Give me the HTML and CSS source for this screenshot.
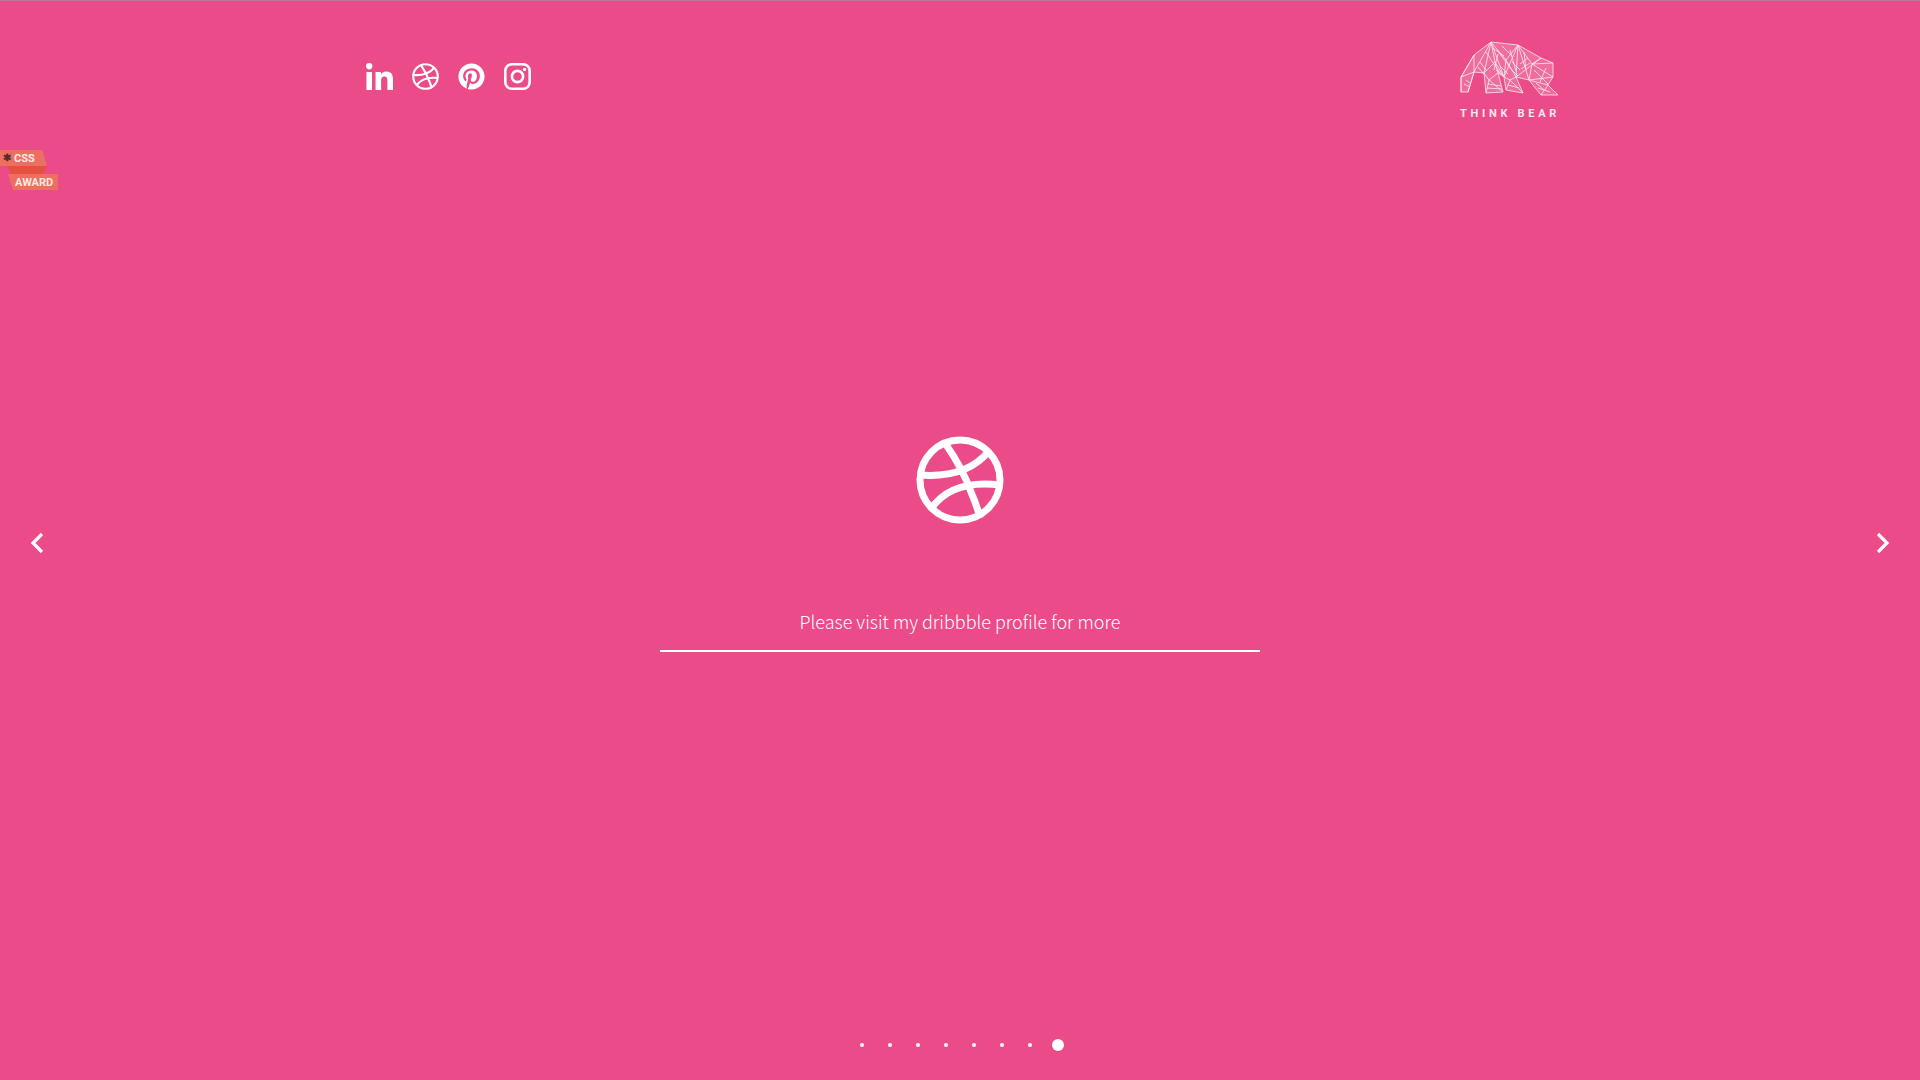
FILE: index.html
```html
<!DOCTYPE html>
<html lang="en">
<head>
<meta charset="utf-8">
<title>Think Bear</title>
<link rel="stylesheet" href="styles.css">
</head>
<body>
<svg class="defs" aria-hidden="true">
  <symbol id="dribbble" viewBox="0 0 88 88">
    <g fill="none" stroke="currentColor" stroke-width="7">
      <circle cx="44" cy="44" r="40"/>
      <path d="M29 7C38 20 48 36 55 56C59 65 62 74 64 82"/>
      <path d="M3.5 39C30 41 56 36 73 15"/>
      <path d="M15 73C28 54 50 45 84 49"/>
    </g>
  </symbol>
</svg>

<header class="top">
  <nav class="social">
    <svg class="icon" viewBox="0 0 448 448"><path fill="currentColor" d="M100.28 448H7.4V148.9h92.88zM53.79 108.1C24.09 108.1 0 83.5 0 53.8a53.79 53.79 0 0 1 107.58 0c0 29.7-24.1 54.3-53.79 54.3zM447.9 448h-92.68V302.4c0-34.7-.7-79.2-48.29-79.2-48.29 0-55.69 37.7-55.69 76.7V448h-92.78V148.9h89.08v40.8h1.3c12.4-23.5 42.69-48.3 87.88-48.3 94 0 111.28 61.9 111.28 142.3V448z"/></svg>
    <svg class="icon"><use href="#dribbble"/></svg>
    <svg class="icon" viewBox="0 0 496 512"><path fill="currentColor" d="M496 256c0 137-111 248-248 248-25.6 0-50.2-3.9-73.4-11.1 10.1-16.5 25.2-43.5 30.8-65 3-11.6 15.4-59 15.4-59 8.1 15.4 31.7 28.5 56.8 28.5 74.8 0 128.7-68.8 128.7-154.3 0-81.9-66.9-143.2-152.9-143.2-107 0-163.9 71.8-163.9 150.1 0 36.4 19.4 81.7 50.3 96.1 4.7 2.2 7.2 1.2 8.3-3.3.8-3.4 5-20.3 6.9-28.1.6-2.5.3-4.7-1.7-7.1-10.1-12.5-18.3-35.3-18.3-56.6 0-54.7 41.4-107.6 112-107.6 60.9 0 103.6 41.5 103.6 100.9 0 67.1-33.9 113.6-78 113.6-24.3 0-42.6-20.1-36.7-44.8 7-29.5 20.5-61.3 20.5-82.6 0-19-10.2-34.9-31.4-34.9-24.9 0-44.9 25.7-44.9 60.2 0 22 7.4 36.8 7.4 36.8s-24.5 103.8-29 123.2c-5 21.4-3 51.6-.9 71.2C65.4 450.9 0 361.1 0 256 0 119 111 8 248 8s248 111 248 248z"/></svg>
    <svg class="icon" viewBox="0 0 27 27"><g fill="none" stroke="currentColor" stroke-width="2.6"><rect x="1.3" y="1.3" width="24.4" height="24.4" rx="6.5"/><circle cx="13.5" cy="13.5" r="5.6"/></g><circle cx="20.6" cy="6.4" r="1.7" fill="currentColor"/></svg>
  </nav>
  <div class="brand">
    <svg class="bear" viewBox="0 0 99 56">
      <g fill="none" stroke="currentColor" stroke-width=".85" stroke-linejoin="round">
        <path class="bear-body" d="M14 15L31 2L58 5L81 18L93 23L93 37L88 45L98 55L81 55L69 40L56 37L63 53L46 50L44 37L38 33L43 52L26 53L24 33L14 32L8 52L1 52L1 37Z"/>
        <path d="M14 15L14 32L31 2L24 33L35 22L31 2L44 37L35 22L38 33M31 2L46 20L44 37L58 5L46 20L56 37L58 5L69 40"/>
        <path d="M1 37L14 32L8 52M1 37L1 52M14 15L1 37M58 5L72 24L81 18L56 37M72 24L69 40L93 37L72 24L93 23M81 55L88 45L69 40"/>
        <path d="M26 53L29 40L43 52M29 40L24 33M29 40L38 33M28 44L41 46M27 48L42 49M46 50L50 40L63 53M50 40L44 37M50 40L56 37M48 45L59 48"/>
        <path d="M37 10L52 30M26 12L40 33M50 10L56 31M64 12L66 30M38 14L34 30M86 28L80 42M74 30L88 44M40 26L48 34M36 30L44 36M52 22L60 30M50 28L58 36M20 22L26 30M18 27L24 34M6 40L11 44M4 44L10 47M33 8L44 16M42 6L52 16M60 24L68 18M61 29L70 23M76 43L84 50M78 48L90 52"/>
      </g>
    </svg>
    <span class="brand-name">THINK BEAR</span>
  </div>
</header>

<aside class="award">
  <span class="award-fold"></span>
  <span class="award-css"><span class="award-star">✱</span>CSS</span>
  <span class="award-name">AWARD</span>
</aside>

<button class="arrow arrow-prev" aria-label="Previous"><svg viewBox="0 0 14 22"><path d="M12 2L3 11L12 20"/></svg></button>
<button class="arrow arrow-next" aria-label="Next"><svg viewBox="0 0 14 22"><path d="M2 2L11 11L2 20"/></svg></button>

<main class="slide">
  <svg class="slide-icon"><use href="#dribbble"/></svg>
  <p class="slide-text">Please visit my dribbble profile for more</p>
</main>

<footer class="dots">
  <span class="dot"></span><span class="dot"></span><span class="dot"></span><span class="dot"></span><span class="dot"></span><span class="dot"></span><span class="dot"></span><span class="dot dot-active"></span>
</footer>
</body>
</html>
```
FILE: styles.css
```css
* { box-sizing: border-box; }
html, body { height: 100%; }
body {
  margin: 0;
  height: 1080px;
  overflow: hidden;
  background: #ec4b89;
  border-top: 1px solid #b97a98;
  color: #fff;
  font-family: "Noto Sans CJK JP", "Noto Sans", sans-serif;
  display: flex;
  flex-direction: column;
}
.defs { display: none; }

.top {
  display: flex;
  justify-content: space-between;
  align-items: flex-start;
  height: 119px;
  padding: 39px 360px 0 366px;
}
.social {
  display: flex;
  gap: 19px;
  margin-top: 23px;
}
.icon { width: 27px; height: 27px; display: block; color: #fff; }

.brand {
  display: flex;
  flex-direction: column;
  align-items: flex-start;
  color: #fff;
}
.bear { width: 99px; height: 56px; display: block; opacity: .85; }
.bear-body { fill: rgba(255, 255, 255, .22); }
.brand-name {
  margin-top: 11px;
  font: 700 11px/14px Roboto, sans-serif;
  letter-spacing: 3.7px;
  white-space: nowrap;
  color: #fde6ee;
}

.award {
  position: absolute;
  left: 0;
  top: 150px;
  width: 60px;
  height: 42px;
}
.award-css, .award-name {
  position: absolute;
  display: flex;
  align-items: center;
  font: 700 11px/1 Roboto, sans-serif;
  background: #ec6f62;
  color: #fde9e4;
}
.award-css {
  left: 0; top: 0; width: 47px; height: 16px; padding-left: 3px;
  clip-path: polygon(0 0, 90% 0, 100% 100%, 0 100%);
}
.award-star { color: #5a2a2a; margin-right: 3px; font-size: 10px; }
.award-name {
  left: 8px; top: 24px; width: 50px; height: 16px; padding-left: 7px;
  clip-path: polygon(0 0, 100% 0, 100% 100%, 10% 100%);
}
.award-fold {
  position: absolute; left: 6px; top: 15px; width: 42px; height: 10px;
  background: #e5503f;
  clip-path: polygon(0 0, 100% 0, 85% 100%, 15% 100%);
}

.arrow {
  position: absolute;
  top: 532px;
  width: 14px;
  height: 22px;
  padding: 0;
  border: 0;
  background: none;
}
.arrow svg { display: block; width: 14px; height: 22px; }
.arrow path { fill: none; stroke: #fff; stroke-width: 3.2; }
.arrow-prev { left: 30px; }
.arrow-next { right: 30px; }

.slide {
  flex: 1;
  display: flex;
  flex-direction: column;
  align-items: center;
  padding-top: 316px;
}
.slide-icon { width: 88px; height: 88px; display: block; }
.slide-text {
  width: 600px;
  margin: 0;
  margin-top: 61px;
  padding: 22px 0 15px;
  border-bottom: 2px solid #fff;
  text-align: center;
  font-size: 18px;
  font-weight: 300;
  line-height: 28px;
  color: #fff;
}

.dots {
  display: flex;
  justify-content: center;
  align-items: center;
  gap: 24px;
  height: 12px;
  margin-bottom: 29px;
}
.dot { width: 4px; height: 4px; border-radius: 50%; background: #fff; flex: none; }
.dot-active { width: 12px; height: 12px; margin: 0 -4px; }
```
